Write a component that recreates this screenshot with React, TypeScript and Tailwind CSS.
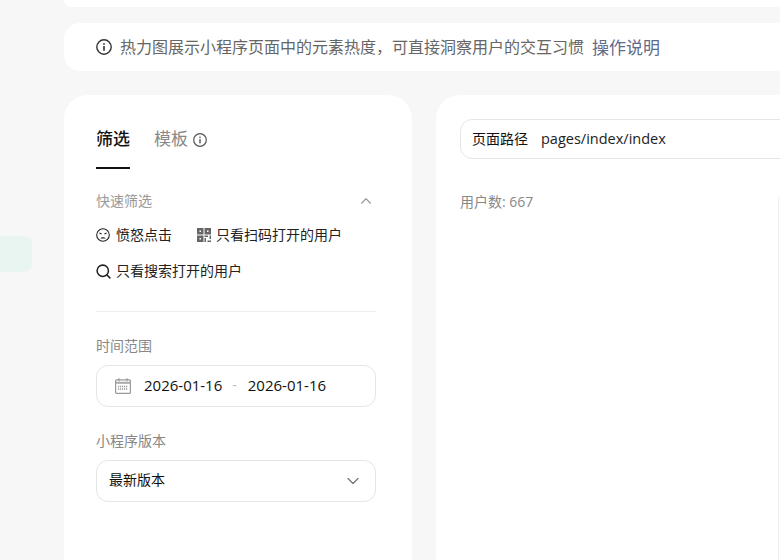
import { ChevronDown, ChevronUp, Search } from "lucide-react";

const FONT = "font-['Open_Sans','Noto_Sans_CJK_SC',sans-serif]";

function InfoIcon({ size, color }: { size: number; color: string }) {
  return (
    <svg width={size} height={size} viewBox="0 0 16 16" fill="none" className="shrink-0">
      <circle cx="8" cy="8" r="7.2" stroke={color} strokeWidth="1.4" />
      <rect x="7.2" y="7" width="1.6" height="4.8" fill={color} />
      <rect x="7.2" y="4.2" width="1.6" height="1.6" fill={color} />
    </svg>
  );
}

function AngryIcon() {
  return (
    <svg width="14" height="14" viewBox="0 0 14 14" fill="none" className="shrink-0">
      <circle cx="7" cy="7" r="6.3" stroke="#222" strokeWidth="1.1" />
      <path d="M3.4 5l2.2 1M10.600 5l-2.200 1" stroke="#222" strokeWidth="1.1" />
      <path d="M4.4 10.600c.5-1.800 4.700-1.800 5.200 0z" fill="#222" />
    </svg>
  );
}

function QrIcon() {
  return (
    <svg width="14" height="14" viewBox="0 0 14 14" fill="none" className="shrink-0">
      <path d="M0 0h6.500v6.500H0zM7.500 0H14v6.500H7.500zM0 7.500h6.500V14H0z" fill="#666" />
      <path d="M2.500 2.500H4V4H2.500zM10 2.500h1.500V4H10zM2.500 10H4v1.500H2.500z" fill="#fff" />
      <path d="M7.500 7.500H11V9H7.500zM12.500 7.500H14V11h-1.500zM7.500 10H9v4H7.500zM10.500 12.500H14V14h-3.500z" fill="#666" />
    </svg>
  );
}

function CalendarIcon() {
  return (
    <svg width="16" height="16" viewBox="0 0 16 16" fill="none" className="shrink-0">
      <rect x="0.600" y="1.800" width="14.800" height="13.600" rx="1" stroke="#999" strokeWidth="1.200" />
      <path d="M0.600 4.800h14.800" stroke="#aaa" strokeWidth="2" />
      <path d="M4 0.300v3M12 0.300v3" stroke="#999" strokeWidth="1.200" />
      <path d="M3 8.500h10M3 11h10" stroke="#999" strokeWidth="1.400" strokeDasharray="1.200 0.800" />
    </svg>
  );
}

export default function App() {
  return (
    <div className={`flex h-[560px] w-[780px] overflow-hidden bg-[#f7f7f7] ${FONT}`}>
      <aside className="w-[64px] shrink-0 pt-[236px]">
        <div className="h-[36px] w-[32px] rounded-r-lg bg-[#e8f5f0]" />
      </aside>

      <main className="flex w-[800px] shrink-0 flex-col">
        <div className="h-[7px] shrink-0 rounded-b-2xl bg-white" />

        <div className="mt-4 flex h-[48px] shrink-0 items-center rounded-2xl bg-white pl-8">
          <InfoIcon size={16} color="#333" />
          <span className="ml-2 text-base leading-none text-[#666]">
            热力图展示小程序页面中的元素热度，可直接洞察用户的交互习惯
          </span>
          <a className="ml-2 text-[17px] leading-none text-[#5f6b8a]">操作说明</a>
        </div>

        <div className="mt-6 flex min-h-0 flex-1 gap-6">
          <section className="w-[348px] shrink-0 rounded-t-3xl bg-white pt-8 pr-9 pl-8">
            <div className="flex items-start">
              <div className="w-[34px]">
                <div className="text-[17px] leading-[24px] font-medium text-[#111]">筛选</div>
                <div className="mt-[16px] h-[2px] bg-[#111]" />
              </div>
              <div className="ml-6 text-[17px] leading-[24px] text-[#888]">模板</div>
              <div className="mt-[6px] ml-[5px]">
                <InfoIcon size={14} color="#555" />
              </div>
            </div>

            <div className="mt-[21px] flex items-center justify-between pr-px">
              <span className="text-sm leading-[22px] text-[#999]">快速筛选</span>
              <ChevronUp size={18} strokeWidth={1.500} className="text-[#999]" />
            </div>

            <div className="mt-[12px] flex items-center">
              <AngryIcon />
              <span className="ml-[6px] text-sm leading-[22px] text-[#222]">愤怒点击</span>
              <span className="ml-[25px]"><QrIcon /></span>
              <span className="ml-[5px] text-sm leading-[22px] text-[#222]">只看扫码打开的用户</span>
            </div>
            <div className="mt-[14px] flex items-center">
              <Search size={17} strokeWidth={2.200} className="-ml-px shrink-0 text-[#222]" />
              <span className="ml-[4px] text-sm leading-[22px] text-[#222]">只看搜索打开的用户</span>
            </div>

            <div className="mt-[29px] h-px bg-[#efefef]" />

            <div className="mt-[23px] text-sm leading-[22px] text-[#888]">时间范围</div>
            <div className="mt-2 flex h-[42px] items-center rounded-xl border border-[#e5e5e5] pl-[18px]">
              <CalendarIcon />
              <span className="mb-[2px] ml-[13px] text-[15px] text-[#111]">2026-01-16</span>
              <span className="mb-[2px] ml-[10px] text-sm text-[#bbb]">-</span>
              <span className="mb-[2px] ml-[11px] text-[15px] text-[#111]">2026-01-16</span>
            </div>

            <div className="mt-[23px] text-sm leading-[22px] text-[#888]">小程序版本</div>
            <div className="mt-2 flex h-[42px] items-center justify-between rounded-xl border border-[#e5e5e5] pr-3 pl-3">
              <span className="mb-[2px] text-sm text-[#111]">最新版本</span>
              <ChevronDown size={20} strokeWidth={1.500} className="text-[#777]" />
            </div>
          </section>

          <section className="min-h-0 flex-1 overflow-hidden rounded-t-3xl bg-white px-6 pt-6">
            <div className="flex h-[40px] items-center rounded-xl border border-[#e5e5e5] pl-[11px]">
              <span className="text-sm text-[#111]">页面路径</span>
              <span className="ml-[13px] text-[14.500px] text-[#222]">pages/index/index</span>
            </div>
            <div className="mt-[32px] flex items-start">
              <div className="w-[318px] shrink-0 text-sm leading-[22px] text-[#888]">用户数: 667</div>
              <div className="mt-[2px] h-[420px] flex-1 rounded-tl-lg border-t border-l border-[#eee]" />
            </div>
          </section>
        </div>
      </main>
    </div>
  );
}
